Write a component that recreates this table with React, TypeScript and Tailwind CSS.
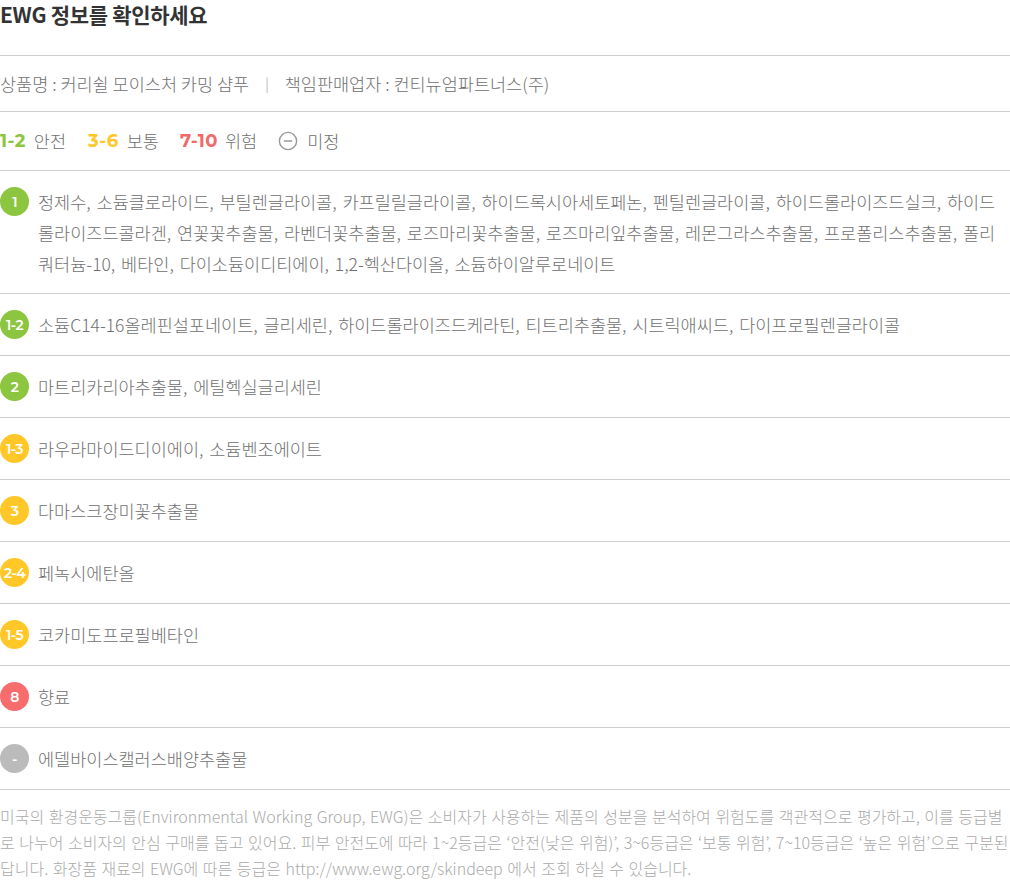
const FONT = { fontFamily: '"Noto Sans CJK KR", "Noto Sans", sans-serif' };
const NUM = { fontFamily: '"Montserrat", "Inter", "Noto Sans CJK KR", sans-serif' };

type Grade = "green" | "yellow" | "red" | "gray";

const badgeBg: Record<Grade, string> = {
  green: "bg-[#8cc540]",
  yellow: "bg-[#ffc828]",
  red: "bg-[#f76d6d]",
  gray: "bg-[#bbbbbb]",
};

const rows: { grade: Grade; label: string; text: string }[] = [
  {
    grade: "green",
    label: "1",
    text:
      "정제수, 소듐클로라이드, 부틸렌글라이콜, 카프릴릴글라이콜, 하이드록시아세토페논, 펜틸렌글라이콜, 하이드롤라이즈드실크, 하이드롤라이즈드콜라겐, 연꽃꽃추출물, 라벤더꽃추출물, 로즈마리꽃추출물, 로즈마리잎추출물, 레몬그라스추출물, 프로폴리스추출물, 폴리쿼터늄-10, 베타인, 다이소듐이디티에이, 1,2-헥산다이올, 소듐하이알루로네이트",
  },
  {
    grade: "green",
    label: "1-2",
    text: "소듐C14-16올레핀설포네이트, 글리세린, 하이드롤라이즈드케라틴, 티트리추출물, 시트릭애씨드, 다이프로필렌글라이콜",
  },
  { grade: "green", label: "2", text: "마트리카리아추출물, 에틸헥실글리세린" },
  { grade: "yellow", label: "1-3", text: "라우라마이드디이에이, 소듐벤조에이트" },
  { grade: "yellow", label: "3", text: "다마스크장미꽃추출물" },
  { grade: "yellow", label: "2-4", text: "페녹시에탄올" },
  { grade: "yellow", label: "1-5", text: "코카미도프로필베타인" },
  { grade: "red", label: "8", text: "향료" },
  { grade: "gray", label: "-", text: "에델바이스캘러스배양추출물" },
];

function Badge({ grade, label }: { grade: Grade; label: string }) {
  return (
    <span
      style={NUM}
      className={`${badgeBg[grade]} mt-px flex h-[29px] w-[29px] shrink-0 items-center justify-center rounded-full text-[14px] font-semibold leading-none tracking-[-0.6px] text-white`}
    >
      {label}
    </span>
  );
}

export default function App() {
  return (
    <main style={FONT} className="w-[1010px] bg-white font-light text-[#707070]">
      <h2 className="pb-[27px] text-[21px] font-bold leading-[28px] tracking-[-0.3px] text-[#333]">
        EWG 정보를 확인하세요
      </h2>

      <div className="flex h-[56px] items-center border-t border-[#cccccc] text-[17.5px] leading-[31px]">
        <span>상품명 : 커리쉴 모이스처 카밍 샴푸</span>
        <span className="mx-[16px] text-[14px] text-[#999]">|</span>
        <span>책임판매업자 : 컨티뉴엄파트너스(주)</span>
      </div>

      <div className="flex h-[59px] items-center border-t border-[#cccccc] text-[17.5px] leading-[30px]">
        <span style={NUM} className="text-[18px] font-bold tracking-[0.5px] text-[#8cc540]">1-2</span>
        <span className="ml-[8px]">안전</span>
        <span style={NUM} className="ml-[22px] text-[18px] font-bold tracking-[0.5px] text-[#ffc828]">3-6</span>
        <span className="ml-[8px]">보통</span>
        <span style={NUM} className="ml-[21px] text-[18px] font-bold tracking-[0.5px] text-[#f06a6a]">7-10</span>
        <span className="ml-[7px]">위험</span>
        <svg className="ml-[21px]" width="20" height="20" viewBox="0 0 20 20" fill="none">
          <circle cx="10" cy="10" r="8.6" stroke="#999" strokeWidth="1.4" />
          <path d="M6.3 10h7.4" stroke="#999" strokeWidth="1.4" strokeLinecap="round" />
        </svg>
        <span className="ml-[9px]">미정</span>
      </div>

      <ul>
        {rows.map((r, i) => (
          <li
            key={r.label + r.text.slice(0, 4)}
            className={`flex items-start gap-[9px] border-t border-[#cccccc] pt-[15px] text-[17.5px] leading-[31px] [word-spacing:2px] ${
              i === 0 ? "pb-[14px]" : "pb-[15px]"
            }`}
          >
            <Badge grade={r.grade} label={r.label} />
            <p>{r.text}</p>
          </li>
        ))}
      </ul>

      <p className="border-t border-[#cccccc] pt-[13px] text-[16px] leading-[26px] text-[#aaa] [word-spacing:1px]">
        미국의 환경운동그룹(Environmental Working Group, EWG)은 소비자가 사용하는 제품의 성분을 분석하여 위험도를 객관적으로 평가하고, 이를 등급별로 나누어 소비자의 안심 구매를 돕고 있어요. 피부 안전도에 따라 1~2등급은 ‘안전(낮은 위험)’, 3~6등급은 ‘보통 위험’, 7~10등급은 ‘높은 위험’으로 구분된답니다. 화장품 재료의 EWG에 따른 등급은 http://www.ewg.org/skindeep 에서 조회 하실 수 있습니다.
      </p>
    </main>
  );
}
